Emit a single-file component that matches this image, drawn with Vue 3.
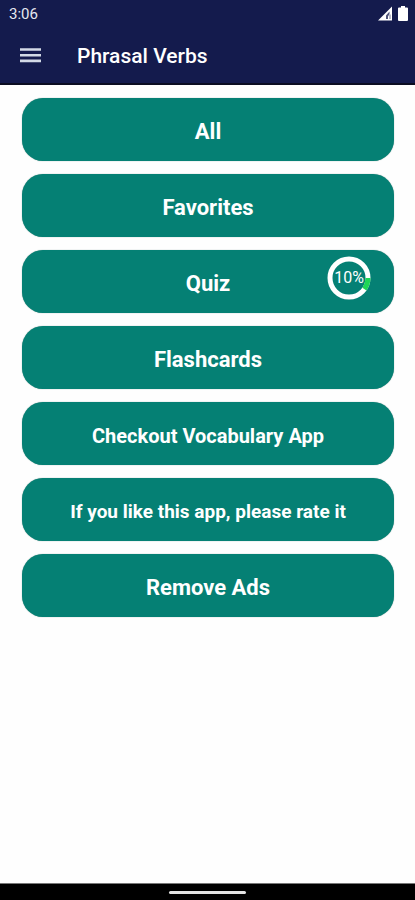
<script setup>
const items = [
  { label: 'All' },
  { label: 'Favorites' },
  { label: 'Quiz', progress: 10 },
  { label: 'Flashcards' },
  { label: 'Checkout Vocabulary App', size: 'medium' },
  { label: 'If you like this app, please rate it', size: 'small' },
  { label: 'Remove Ads' },
]
</script>

<template>
  <div class="screen">
    <header class="top">
      <div class="status">
        <span>3:06</span>
        <span class="status-icons">
          <svg width="14" height="15" viewBox="0 0 14 15" aria-hidden="true">
            <path d="M0 14.5 14 0.5V14.5Z" fill="#fff" />
            <path d="M8 13V9.5L11.5 5.5V8L10 10.5V13Z" fill="#141b4d" opacity="0.75" />
            <path d="M12 8.5V13" stroke="#141b4d" stroke-width="1" opacity="0.6" />
          </svg>
          <svg width="10" height="15" viewBox="0 0 10 15" aria-hidden="true">
            <path d="M3 0H7V1.5H9Q10 1.5 10 2.5V14Q10 15 9 15H1Q0 15 0 14V2.5Q0 1.5 1 1.5H3Z" fill="#fff" />
          </svg>
        </span>
      </div>
      <div class="bar">
        <button class="menu" type="button" aria-label="Menu">
          <svg width="22" height="16" viewBox="0 0 22 16" aria-hidden="true">
            <path d="M0 1.5H21M0 7.2H21M0 12.9H21" stroke="#d3dae6" stroke-width="2.6" />
          </svg>
        </button>
        <h1>Phrasal Verbs</h1>
      </div>
    </header>

    <main class="list">
      <button v-for="item in items" :key="item.label" type="button" class="item" :class="item.size">
        {{ item.label }}
        <span v-if="item.progress" class="ring">
          <svg width="44" height="44" viewBox="0 0 44 44" aria-hidden="true">
            <circle cx="22" cy="22" r="19" fill="none" stroke="#fff" stroke-width="5" />
            <circle
              cx="22" cy="22" r="19" fill="none" stroke="#1fd655" stroke-width="5"
              pathLength="100" :stroke-dasharray="`${item.progress} 100`"
            />
          </svg>
          <span class="percent">{{ item.progress }}%</span>
        </span>
      </button>
    </main>

    <footer class="nav"><span class="handle"></span></footer>
  </div>
</template>

<style>
body {
  margin: 0;
  background: #fff;
}
</style>

<style scoped>
.screen {
  min-height: 100vh;
  display: flex;
  flex-direction: column;
  font-family: Roboto, "Liberation Sans", sans-serif;
  color: #fff;
  background: #fefefe;
}
.top {
  background: #141b4d;
  border-bottom: 2px solid #0b0d22;
}
.status {
  height: 27px;
  padding: 0 7px 0 9px;
  display: flex;
  align-items: center;
  justify-content: space-between;
  font-size: 15px;
  line-height: 28px;
  color: #e6e8f0;
}
.status-icons {
  display: flex;
  gap: 6px;
}
.bar {
  height: 56px;
  padding: 2px 20px 0;
  box-sizing: border-box;
  display: flex;
  align-items: center;
  gap: 35px;
}
.menu {
  display: flex;
  padding: 0;
  border: 0;
  background: none;
}
h1 {
  margin: 0;
  font-size: 21px;
  line-height: 28px;
  font-weight: 500;
}
.list {
  flex: 1;
  display: flex;
  flex-direction: column;
  gap: 13px;
  padding: 13px 21px 13px 22px;
}
.item {
  position: relative;
  height: 63px;
  padding: 4px 16px 0;
  border: 0;
  border-radius: 21px;
  background: #058074;
  box-shadow: 0 0 1px #6f8f8a;
  color: #fff;
  font-family: inherit;
  font-size: 22px;
  line-height: 28px;
  font-weight: 700;
}
.item.medium {
  font-size: 20px;
}
.item.small {
  font-size: 19px;
}
.ring {
  position: absolute;
  top: 6px;
  right: 23px;
  display: grid;
  place-items: center;
}
.ring > * {
  grid-area: 1 / 1;
}
.percent {
  font-size: 16px;
  line-height: 20px;
  font-weight: 400;
}
.nav {
  height: 16px;
  display: flex;
  align-items: center;
  justify-content: center;
  background: #000;
  border-top: 1px solid #777;
}
.handle {
  width: 77px;
  height: 3px;
  border-radius: 2px;
  background: #e4e4e4;
}
</style>
